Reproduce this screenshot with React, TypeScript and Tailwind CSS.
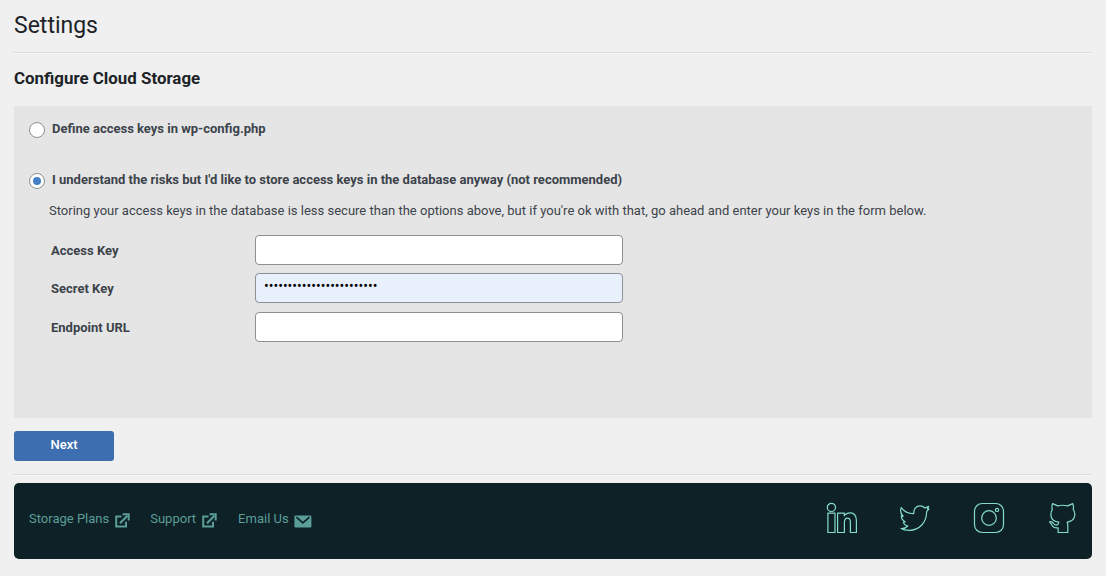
import React, { useState } from "react";

function ExternalIcon() {
  return (
    <svg width="15" height="15" viewBox="0 0 15 15" className="mt-[2px]" fill="none" stroke="#5a9e97" strokeWidth="2">
      <path d="M6.5 3.5H1.2V13.6H11V8.8" />
      <path d="M5 10.2L12.4 2.8" strokeWidth="2.2" />
      <path d="M7.6 1.2H13.7V7.4" />
    </svg>
  );
}

function MailIcon() {
  return (
    <svg width="18" height="13" viewBox="0 0 18 13">
      <rect x="0.4" y="0.4" width="17" height="12.2" rx="1.4" fill="#5a9e97" />
      <path d="M2.4 2.2L8.9 7.9L15.4 2.2" fill="none" stroke="#0e2127" strokeWidth="1.7" />
    </svg>
  );
}

const outline = { fill: "none", stroke: "#85dccb", strokeWidth: 1.2, strokeLinejoin: "round" as const };

function LinkedinIcon() {
  return (
    <svg width="32" height="32" viewBox="0 0 32 32" {...outline}>
      <circle cx="6.4" cy="5.4" r="4.1" />
      <path d="M2.9 11.1H10V30.5H2.9ZM12.6 11.1H19.3V13.8C20.6 11.7 22.7 10.8 25.4 10.8C29.9 10.8 31.4 13.7 31.4 19V30.5H25.4V20.4C25.4 17.5 24.5 16.1 22.6 16.1C20.4 16.1 19.4 17.7 19.4 20.4V30.5H12.6Z" />
    </svg>
  );
}

function TwitterIcon() {
  return (
    <svg width="32" height="32" viewBox="0 0 32 32" {...outline}>
      <path d="M3.3 5.5C6.2 9.8 10.4 11.7 15.8 11.6C15.4 7.2 18 3.8 22 3.8C24.1 3.8 25.6 4.7 26.8 6L30.7 4.4L29.3 6.8L31 6.8L28.6 9.6C28.8 20.4 21.3 28.3 11.4 28.3C7.8 28.3 5 27.7 3.1 26.5C5.6 26.6 8.3 25.7 9.8 24C7.4 23.8 6 22.2 5.4 20.2L7.1 19.8C4.9 18.5 3.4 16.6 3.3 13.9L5.1 14.3C2.6 11.9 2.1 8.8 3.3 5.5Z" />
    </svg>
  );
}

function InstagramIcon() {
  return (
    <svg width="32" height="32" viewBox="0 0 32 32" {...outline}>
      <rect x="1.5" y="1.5" width="29" height="29" rx="7.8" />
      <circle cx="16" cy="16" r="7.3" />
      <circle cx="24" cy="7.9" r="1.6" />
    </svg>
  );
}

function GithubIcon() {
  return (
    <svg width="32" height="32" viewBox="0 0 32 32" {...outline}>
      <path d="M6.6 1.6L11.7 3.9C14.8 3.1 18.5 3.1 21.7 3.9L26.7 1.6C27.6 3.6 27.8 5.3 27.2 7.3C28.7 9.3 29.1 11.7 28.6 14.2C27.9 18 25.4 19.5 21.2 20.2C21.6 21.3 21.8 22 21.8 23V30.5H12.1V25.8C9.2 26.3 7.5 25.6 6.3 23.8C5.5 22.4 4.6 20.9 3.5 19.9C4.6 19.2 6.5 20.1 7.4 21.4C8.6 23 10.4 23.6 12 22.6C12.1 21.6 12.4 21 12.9 20.2C8.3 19.5 5.5 17.7 5 13.8C4.7 11.2 5.1 9.2 6.4 7.2C5.7 5.5 5.9 3.2 6.6 1.6Z" />
    </svg>
  );
}

function Radio({ checked, label, onChange }: { checked: boolean; label: string; onChange: () => void }) {
  return (
    <label className="flex h-4 items-start gap-[7px] text-[13px] leading-[15px] font-bold">
      <input type="radio" checked={checked} onChange={onChange} className="peer sr-only" />
      <span className="mt-px flex size-4 shrink-0 items-center justify-center rounded-full border border-[#8c8f94] bg-white">
        {checked && <span className="size-2 rounded-full bg-[#467fc6]" />}
      </span>
      {label}
    </label>
  );
}

function Field({ label, type = "text", value = "", filled = false }: { label: string; type?: string; value?: string; filled?: boolean }) {
  return (
    <label className="flex h-[30px] items-center">
      <span className="w-[204px] pt-[2px] text-[13px] font-bold">{label}</span>
      <input
        type={type}
        defaultValue={value}
        className={`h-[30px] w-[368px] rounded-[4px] border border-[#8c8f94] px-2 text-[14px] text-black outline-none ${filled ? "bg-[#e8f0fe] pb-[5px]" : "bg-white"}`}
      />
    </label>
  );
}

export default function App() {
  const [choice, setChoice] = useState("database");
  return (
    <main className="h-[576px] bg-[#f0f0f0] px-[14px] pt-[11px] font-[Roboto,sans-serif] text-[#3c434a]">
      <h1 className="h-[41px] text-[23px] leading-[29px] text-[#1d2327]">Settings</h1>
      <hr className="border-t border-b border-t-[#dcdcde] border-b-[#f6f7f7]" />
      <h2 className="flex h-[52px] items-center pb-[2px] text-[16.9px] font-bold text-[#1d2327]">Configure Cloud Storage</h2>

      <section className="h-[312px] bg-[#e5e5e5] px-[15px] pt-[15px]">
        <Radio checked={choice === "config"} onChange={() => setChoice("config")} label="Define access keys in wp-config.php" />
        <div className="h-[35px]" />
        <Radio
          checked={choice === "database"}
          onChange={() => setChoice("database")}
          label="I understand the risks but I'd like to store access keys in the database anyway (not recommended)"
        />
        <p className="mt-[14px] ml-5 h-[33px] text-[13px] leading-[17px] tracking-[0.006px] whitespace-nowrap">
          Storing your access keys in the database is less secure than the options above, but if you're ok with that, go ahead and enter your keys in the form below.
        </p>
        <div className="ml-[22px] flex flex-col">
          <Field label="Access Key" />
          <div className="h-2" />
          <Field label="Secret Key" type="password" value="abcdefghijklmnopqrstuvwx" filled />
          <div className="h-[9px]" />
          <Field label="Endpoint URL" />
        </div>
      </section>

      <button className="mt-[13px] flex h-[30px] w-[100px] justify-center rounded-[3px] bg-[#3c6eb0] pt-[5px] text-[13px] leading-[17px] font-medium text-white">
        Next
      </button>
      <hr className="mt-[13px] border-t border-b border-t-[#dcdcde] border-b-[#f6f7f7]" />

      <footer className="mt-[7px] flex h-[76px] items-center justify-between rounded-[5px] bg-[#0e2127] pr-[14px] pl-[15px]">
        <nav className="flex h-[18px] -translate-y-px items-start text-[13px] leading-[15px] text-[#5a9e97]">
          <a className="flex gap-[6px]">Storage Plans<ExternalIcon /></a>
          <a className="ml-5 flex gap-[6px]">Support<ExternalIcon /></a>
          <a className="ml-[21px] flex gap-[5px]">Email Us<span className="mt-[4px]"><MailIcon /></span></a>
        </nav>
        <div className="mb-[6px] flex">
          <LinkedinIcon />
          <div className="w-[41px]" />
          <TwitterIcon />
          <div className="w-[43px]" />
          <InstagramIcon />
          <div className="w-[41px]" />
          <GithubIcon />
        </div>
      </footer>
    </main>
  );
}
